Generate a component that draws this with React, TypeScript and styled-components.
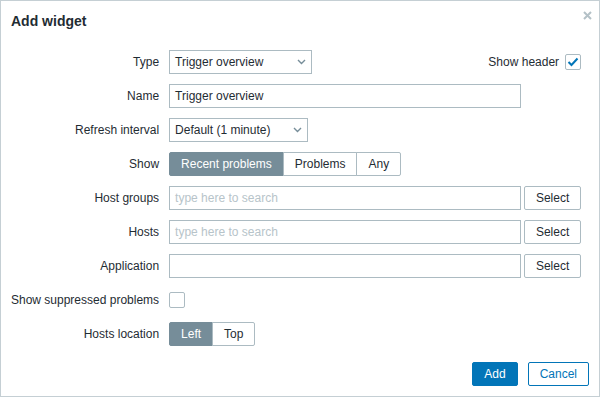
import React from 'react';
import styled, { createGlobalStyle } from 'styled-components';

const GlobalStyle = createGlobalStyle`
  html, body {
    margin: 0;
    padding: 0;
    background: #ffffff;
  }
  body {
    font-family: 'Liberation Sans', Arial, sans-serif;
    font-size: 12px;
    color: #1f2c33;
  }
`;

const Dialog = styled.div`
  width: 600px;
  height: 397px;
  box-sizing: border-box;
  border: 1px solid #c5cfd4;
  background: #ffffff;
  display: flex;
  flex-direction: column;
  position: relative;
`;

const Header = styled.div`
  height: 40px;
  display: flex;
  align-items: center;
  padding: 0 10px;
`;

const Title = styled.h4`
  margin: 0;
  font-size: 14px;
  font-weight: bold;
  line-height: 16px;
  color: #1f2c33;
`;

const CloseButton = styled.button`
  position: absolute;
  top: 8px;
  right: 6px;
  width: 12px;
  height: 12px;
  padding: 0;
  border: 0;
  background: transparent;
  display: flex;
  align-items: center;
  justify-content: center;
`;

const Form = styled.div`
  display: grid;
  grid-template-columns: auto 1fr;
  column-gap: 10px;
  row-gap: 10px;
  padding: 9px 18px 0 10px;
`;

const Label = styled.label`
  height: 24px;
  display: flex;
  align-items: center;
  justify-content: flex-end;
  white-space: nowrap;
`;

const Field = styled.div`
  height: 24px;
  display: flex;
  align-items: center;
`;

const SelectBox = styled.div<{ width: number }>`
  width: ${({ width }) => width}px;
  height: 24px;
  box-sizing: border-box;
  border: 1px solid #acbbc2;
  padding: 0 5px;
  display: flex;
  align-items: center;
  justify-content: space-between;
  white-space: nowrap;
`;

const TextInput = styled.div<{ placeholder?: boolean }>`
  width: 352px;
  height: 24px;
  box-sizing: border-box;
  border: 1px solid #acbbc2;
  padding: 0 5px;
  display: flex;
  align-items: center;
  color: ${({ placeholder }) => (placeholder ? '#b7c4ca' : '#1f2c33')};
`;

const SelectButton = styled.button`
  margin-left: 3px;
  width: 57px;
  height: 24px;
  box-sizing: border-box;
  border: 1px solid #acbbc2;
  border-radius: 2px;
  background: #ffffff;
  color: #1f2c33;
  font: inherit;
  padding: 0;
`;

const SegmentGroup = styled.div`
  display: flex;
  height: 24px;
`;

const Segment = styled.span<{ active?: boolean }>`
  height: 24px;
  box-sizing: border-box;
  padding: 0 11px;
  display: flex;
  align-items: center;
  border: 1px solid ${({ active }) => (active ? '#768d99' : '#acbbc2')};
  background: ${({ active }) => (active ? '#768d99' : '#ffffff')};
  color: ${({ active }) => (active ? '#ffffff' : '#1f2c33')};
  white-space: nowrap;

  & + & {
    margin-left: -1px;
  }

  &:first-child {
    border-radius: 2px 0 0 2px;
  }

  &:last-child {
    border-radius: 0 2px 2px 0;
  }
`;

const Check = styled.span`
  width: 16px;
  height: 16px;
  box-sizing: border-box;
  border: 1px solid #acbbc2;
  border-radius: 2px;
  display: flex;
  align-items: center;
  justify-content: center;
`;

const HeaderToggle = styled.div`
  margin-left: auto;
  display: flex;
  align-items: center;
  gap: 6px;
`;

const Footer = styled.div`
  margin-top: auto;
  display: flex;
  justify-content: flex-end;
  gap: 10px;
  padding: 0 10px 10px;
`;

const FooterButton = styled.button<{ primary?: boolean }>`
  height: 24px;
  box-sizing: border-box;
  padding: 0 11px;
  border: 1px solid #0275b8;
  border-radius: 2px;
  background: ${({ primary }) => (primary ? '#0275b8' : '#ffffff')};
  color: ${({ primary }) => (primary ? '#ffffff' : '#0275b8')};
  font: inherit;
`;

const Chevron = () => (
  <svg width="9" height="6" viewBox="0 0 9 6">
    <path d="M1 1l3.5 3.5L8 1" fill="none" stroke="#768d99" strokeWidth="1.4" />
  </svg>
);

const Checkbox = ({ checked }: { checked?: boolean }) => (
  <Check>
    {checked && (
      <svg width="12" height="10" viewBox="0 0 12 10">
        <path d="M1.5 5l3 3 6-6.5" fill="none" stroke="#0275b8" strokeWidth="2" />
      </svg>
    )}
  </Check>
);

const Select = ({ value, width }: { value: string; width: number }) => (
  <SelectBox width={width}>
    <span>{value}</span>
    <Chevron />
  </SelectBox>
);

const App = () => (
  <>
    <GlobalStyle />
    <Dialog>
      <Header>
        <Title>Add widget</Title>
      </Header>
      <CloseButton>
        <svg width="9" height="9" viewBox="0 0 9 9">
          <path d="M1 1l7 7M8 1L1 8" stroke="#b4c1c7" strokeWidth="2" />
        </svg>
      </CloseButton>

      <Form>
        <Label>Type</Label>
        <Field>
          <Select value="Trigger overview" width={143} />
          <HeaderToggle>
            <span>Show header</span>
            <Checkbox checked />
          </HeaderToggle>
        </Field>

        <Label>Name</Label>
        <Field>
          <TextInput>Trigger overview</TextInput>
        </Field>

        <Label>Refresh interval</Label>
        <Field>
          <Select value="Default (1 minute)" width={139} />
        </Field>

        <Label>Show</Label>
        <Field>
          <SegmentGroup>
            <Segment active>Recent problems</Segment>
            <Segment>Problems</Segment>
            <Segment>Any</Segment>
          </SegmentGroup>
        </Field>

        <Label>Host groups</Label>
        <Field>
          <TextInput placeholder>type here to search</TextInput>
          <SelectButton>Select</SelectButton>
        </Field>

        <Label>Hosts</Label>
        <Field>
          <TextInput placeholder>type here to search</TextInput>
          <SelectButton>Select</SelectButton>
        </Field>

        <Label>Application</Label>
        <Field>
          <TextInput />
          <SelectButton>Select</SelectButton>
        </Field>

        <Label>Show suppressed problems</Label>
        <Field>
          <Checkbox />
        </Field>

        <Label>Hosts location</Label>
        <Field>
          <SegmentGroup>
            <Segment active>Left</Segment>
            <Segment>Top</Segment>
          </SegmentGroup>
        </Field>
      </Form>

      <Footer>
        <FooterButton primary>Add</FooterButton>
        <FooterButton>Cancel</FooterButton>
      </Footer>
    </Dialog>
  </>
);

export default App;
